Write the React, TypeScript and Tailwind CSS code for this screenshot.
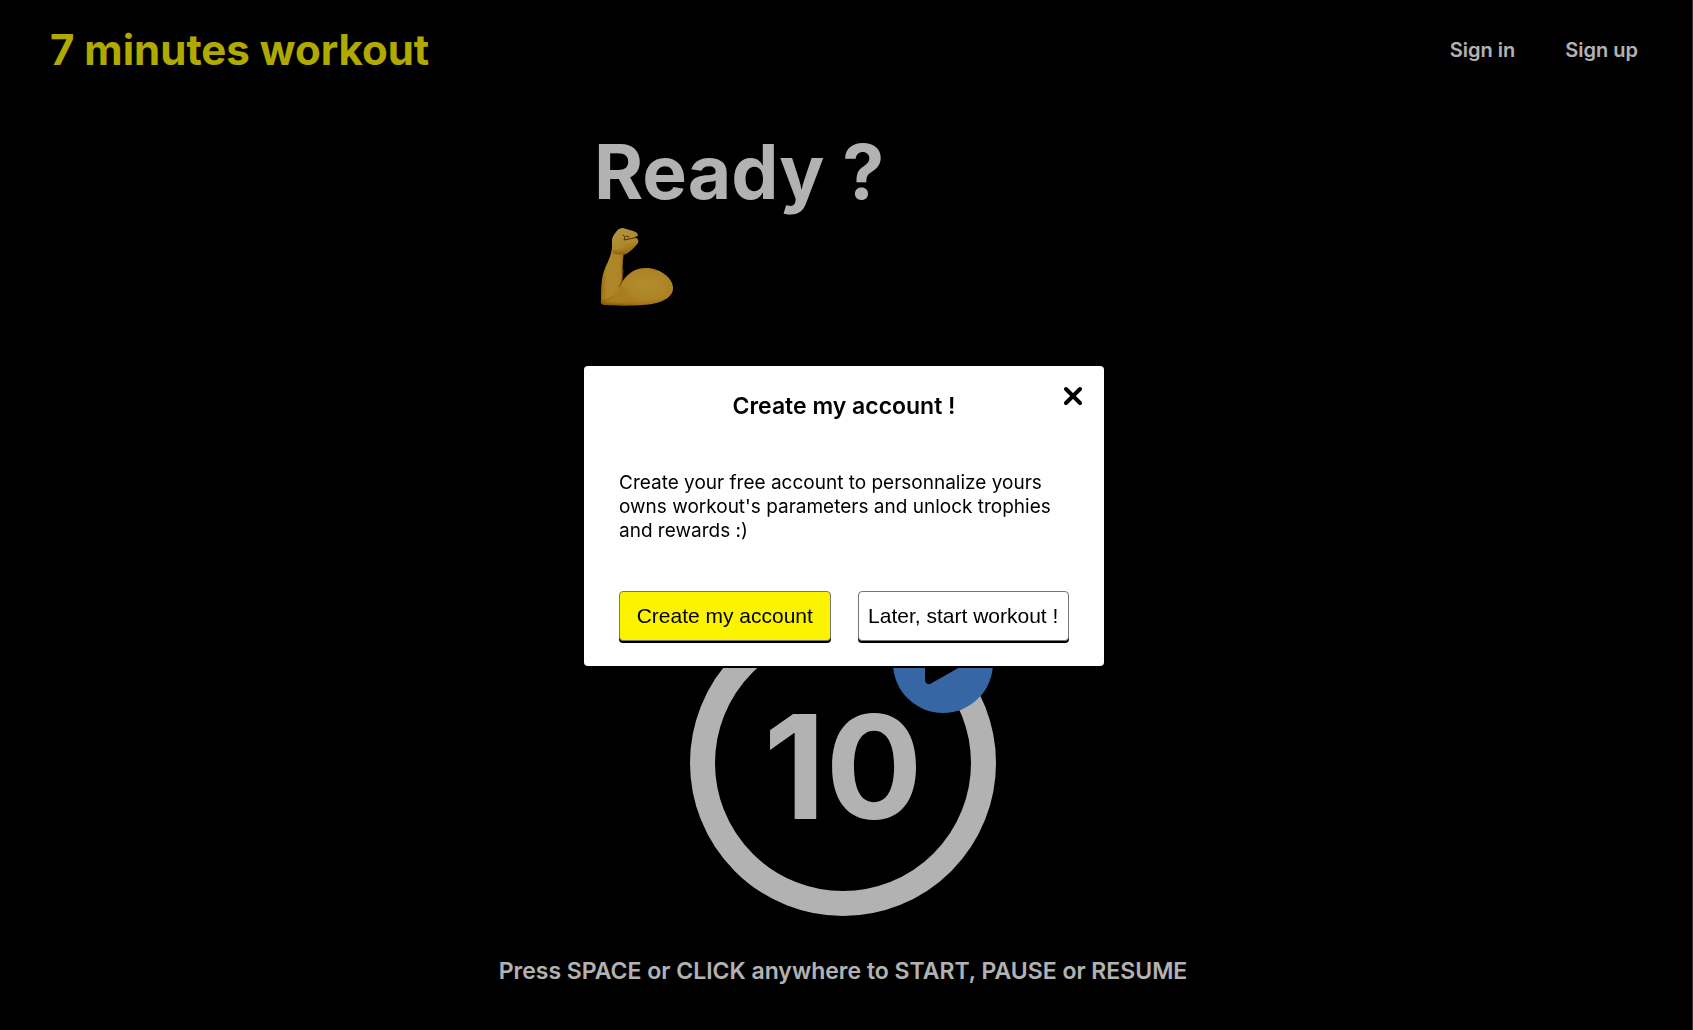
function FlexedArm() {
  return (
    <svg viewBox="0 0 100 100" className="size-[100px]" role="img" aria-label="Flexed arm">
      <defs>
        <radialGradient id="bicep" cx="0.62" cy="0.45" r="0.62">
          <stop offset="0" stopColor="#ffcb42" />
          <stop offset="0.65" stopColor="#f7bb33" />
          <stop offset="0.9" stopColor="#e09a14" />
          <stop offset="1" stopColor="#c98208" />
        </radialGradient>
        <linearGradient id="forearm" x1="0" x2="1" y1="0" y2="0">
          <stop offset="0" stopColor="#e09c18" />
          <stop offset="0.25" stopColor="#fac23c" />
          <stop offset="0.75" stopColor="#f9c03a" />
          <stop offset="1" stopColor="#e09c18" />
        </linearGradient>
        <linearGradient id="fist" x1="0" x2="0.4" y1="0" y2="1">
          <stop offset="0" stopColor="#ffd75e" />
          <stop offset="0.7" stopColor="#fac540" />
          <stop offset="1" stopColor="#e29c18" />
        </linearGradient>
        <filter id="soft" x="-20%" y="-20%" width="140%" height="140%">
          <feGaussianBlur stdDeviation="1" />
        </filter>
      </defs>
      <path
        d="M32 67C36 61 43 53 56 53C68 53 82 61 83 72C84 81 74 87 62 89C50 91 25 91 16 90C12 90 10 89 11 85C15 76 24 72 32 67Z"
        fill="url(#bicep)"
      />
      <path
        d="M11 86C11 78 11 64 14 56C17 48 21 42 22 33H35C32 42 33 55 32 68C30 76 22 84 11 86Z"
        fill="url(#forearm)"
      />
      <path d="M12 87C20 84 27 78 29 70L35 71C36 79 42 84 50 86C38 89 22 89 12 87Z" fill="#f3b22d" filter="url(#soft)" />
      <path d="M33 54C33 60 32 64 32 67L29 72" fill="none" stroke="#a2600a" strokeWidth="1" />
      <path
        d="M22 34V25C22 22 24 20 26 17C28 14 30 13 33 13L43 16C46 17 48 18 48 21L44 23C48 23 49 25 48 28C45 32 40 37 36 39C30 41 24 39 22 34Z"
        fill="url(#fist)"
      />
      <path d="M23 36C26 39 31 39 35 38" fill="none" stroke="#c98510" strokeWidth="2" filter="url(#soft)" />
      <path
        d="M33 20L35 22L34 25L39 24L44 23L47 21M36 21L39 22"
        fill="none"
        stroke="#7a4206"
        strokeWidth="1"
        strokeLinejoin="round"
        strokeLinecap="round"
      />
    </svg>
  );
}

export default function App() {
  return (
    <div className="relative min-h-screen bg-black font-['Inter',sans-serif] text-white">
      <header className="flex h-[100px] items-center justify-between px-[50px]">
        <h1 className="text-[42px] leading-none font-bold text-[#fcf300]">7 minutes workout</h1>
        <nav className="flex gap-[50px] pr-[5px] text-[20px] font-semibold">
          <a href="#signin">Sign in</a>
          <a href="#signup">Sign up</a>
        </nav>
      </header>

      <main className="flex flex-col items-center pr-[7px]">
        <div className="w-[498px] pt-6">
          <h2 className="text-[75px] leading-[95px] font-bold">Ready ?</h2>
          <div className="-ml-1 -mt-1">
            <FlexedArm />
          </div>
        </div>

        <div className="relative mt-[295px] flex size-[306px] items-center justify-center rounded-full border-[25px] border-white">
          <span className="pt-2 text-[144px] leading-none font-bold">10</span>
          <svg viewBox="0 0 100 100" className="absolute -top-[22px] right-[-22px] size-[100px]" aria-hidden="true">
            <circle cx="50" cy="50" r="50" fill="#4f93ec" />
            <path d="M36 32L66 50L36 67Z" fill="#000" stroke="#000" strokeWidth="8" strokeLinejoin="round" />
          </svg>
        </div>

        <p className="mt-10 pb-10 text-[23px] leading-[30px] font-semibold">
          Press SPACE or CLICK anywhere to START, PAUSE or RESUME
        </p>
      </main>

      <div className="fixed inset-0 flex items-center justify-center border-r border-[#30353a] bg-black/30 pr-1">
        <section
          role="dialog"
          aria-modal="true"
          aria-labelledby="dialog-title"
          className="relative mt-[2px] w-[520px] rounded bg-white px-[35px] pt-[25px] pb-[25px] text-black shadow-[0_2px_0_#000]"
        >
          <h3 id="dialog-title" className="text-center text-[23px] leading-[30px] font-semibold">
            Create my account !
          </h3>
          <button type="button" aria-label="Close" className="absolute top-5 right-[21px]">
            <svg viewBox="0 0 20 20" className="size-5">
              <path d="M3 3L17 17M17 3L3 17" fill="none" stroke="#000" strokeWidth="4" strokeLinecap="round" />
            </svg>
          </button>
          <p className="mt-[50px] text-[19px] leading-6">
            Create your free account to personnalize yours owns workout's parameters and unlock trophies and rewards :)
          </p>
          <div className="mt-12 grid grid-cols-2 gap-[27px] font-['Liberation_Sans',Arial,sans-serif] text-[21px]">
            <button type="button" className="h-[50px] rounded border border-[#767676] bg-[#fcf300] whitespace-nowrap shadow-[0_2px_0_#000]">
              Create my account
            </button>
            <button type="button" className="h-[50px] rounded border border-[#767676] bg-white whitespace-nowrap shadow-[0_2px_0_#000]">
              Later, start workout !
            </button>
          </div>
        </section>
      </div>
    </div>
  );
}
